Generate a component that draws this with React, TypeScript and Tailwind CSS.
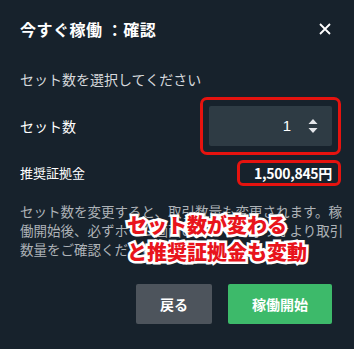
import React from "react";

const font = { fontFamily: '"Noto Sans CJK JP", "Noto Sans", sans-serif' };

function Stepper() {
  return (
    <svg width="12" height="18" viewBox="0 0 12 18" className="text-gray-200">
      <path d="M6 2 L10.5 7 L1.5 7 Z" fill="currentColor" />
      <path d="M6 16 L10.5 11 L1.5 11 Z" fill="currentColor" />
    </svg>
  );
}

export default function App() {
  return (
    <div className="w-[354px] h-[349px] bg-[#17222c] relative overflow-hidden" style={font}>
      <div className="flex items-center justify-between px-5 pt-[16px] h-[42px]">
        <h1 className="text-white font-bold text-[16px] tracking-[0.5px]">今すぐ稼働 ：確認</h1>
        <svg width="14" height="14" viewBox="0 0 14 14" className="mr-[2px]">
          <path d="M2 2 L12 12 M12 2 L2 12" stroke="white" strokeWidth="1.8" />
        </svg>
      </div>

      <p className="px-5 mt-[27px] text-[14px] text-[#d6d9dc] leading-[20px]">セット数を選択してください</p>

      <div className="flex items-center justify-between pl-5 pr-[13px] mt-[8px]">
        <span className="text-[14px] text-white">セット数</span>
        <div className="border-[3px] border-[#e5130f] rounded-[7px] p-[6px] w-[141px] h-[58px]">
          <div className="bg-[#2e3b44] rounded-[2px] h-full flex items-center justify-end pr-[13px] gap-[16px]">
            <span className="text-white text-[15px]" style={{ fontFamily: '"Liberation Sans", sans-serif' }}>1</span>
            <Stepper />
          </div>
        </div>
      </div>

      <div className="flex items-center justify-between pl-5 pr-[13px] mt-[5px]">
        <span className="text-[13px] text-white">推奨証拠金</span>
        <div className="border-[3px] border-[#e5130f] rounded-[6px] w-[104px] h-[26px] flex items-center justify-end pr-[6px]">
          <span className="text-white font-bold text-[14px] tracking-[-0.3px]">1,500,845円</span>
        </div>
      </div>

      <p className="pl-5 pr-[10px] mt-[16px] text-[13.5px] leading-[19px] text-[#aeb3b8]">
        セット数を変更すると、取引数量も変更されます。稼働開始後、必ずホーム画面のポートフォリオより取引数量をご確認ください。
      </p>

      <div className="flex justify-end gap-[16px] pr-[22px] mt-[25px]">
        <button className="w-[76px] h-[40px] bg-[#4d545c] rounded-[2px] text-white font-bold text-[14px]">戻る</button>
        <button className="w-[104px] h-[40px] bg-[#3dba6a] rounded-[2px] text-white font-bold text-[14px]">稼働開始</button>
      </div>

      <div
        className="absolute left-[127px] top-[211px] text-[#e8141c] font-black text-[20px] leading-[27px]"
        style={{ WebkitTextStroke: "5px white", paintOrder: "stroke fill" }}
      >
        <div>セット数が変わる</div>
        <div>と推奨証拠金も変動</div>
      </div>
    </div>
  );
}
